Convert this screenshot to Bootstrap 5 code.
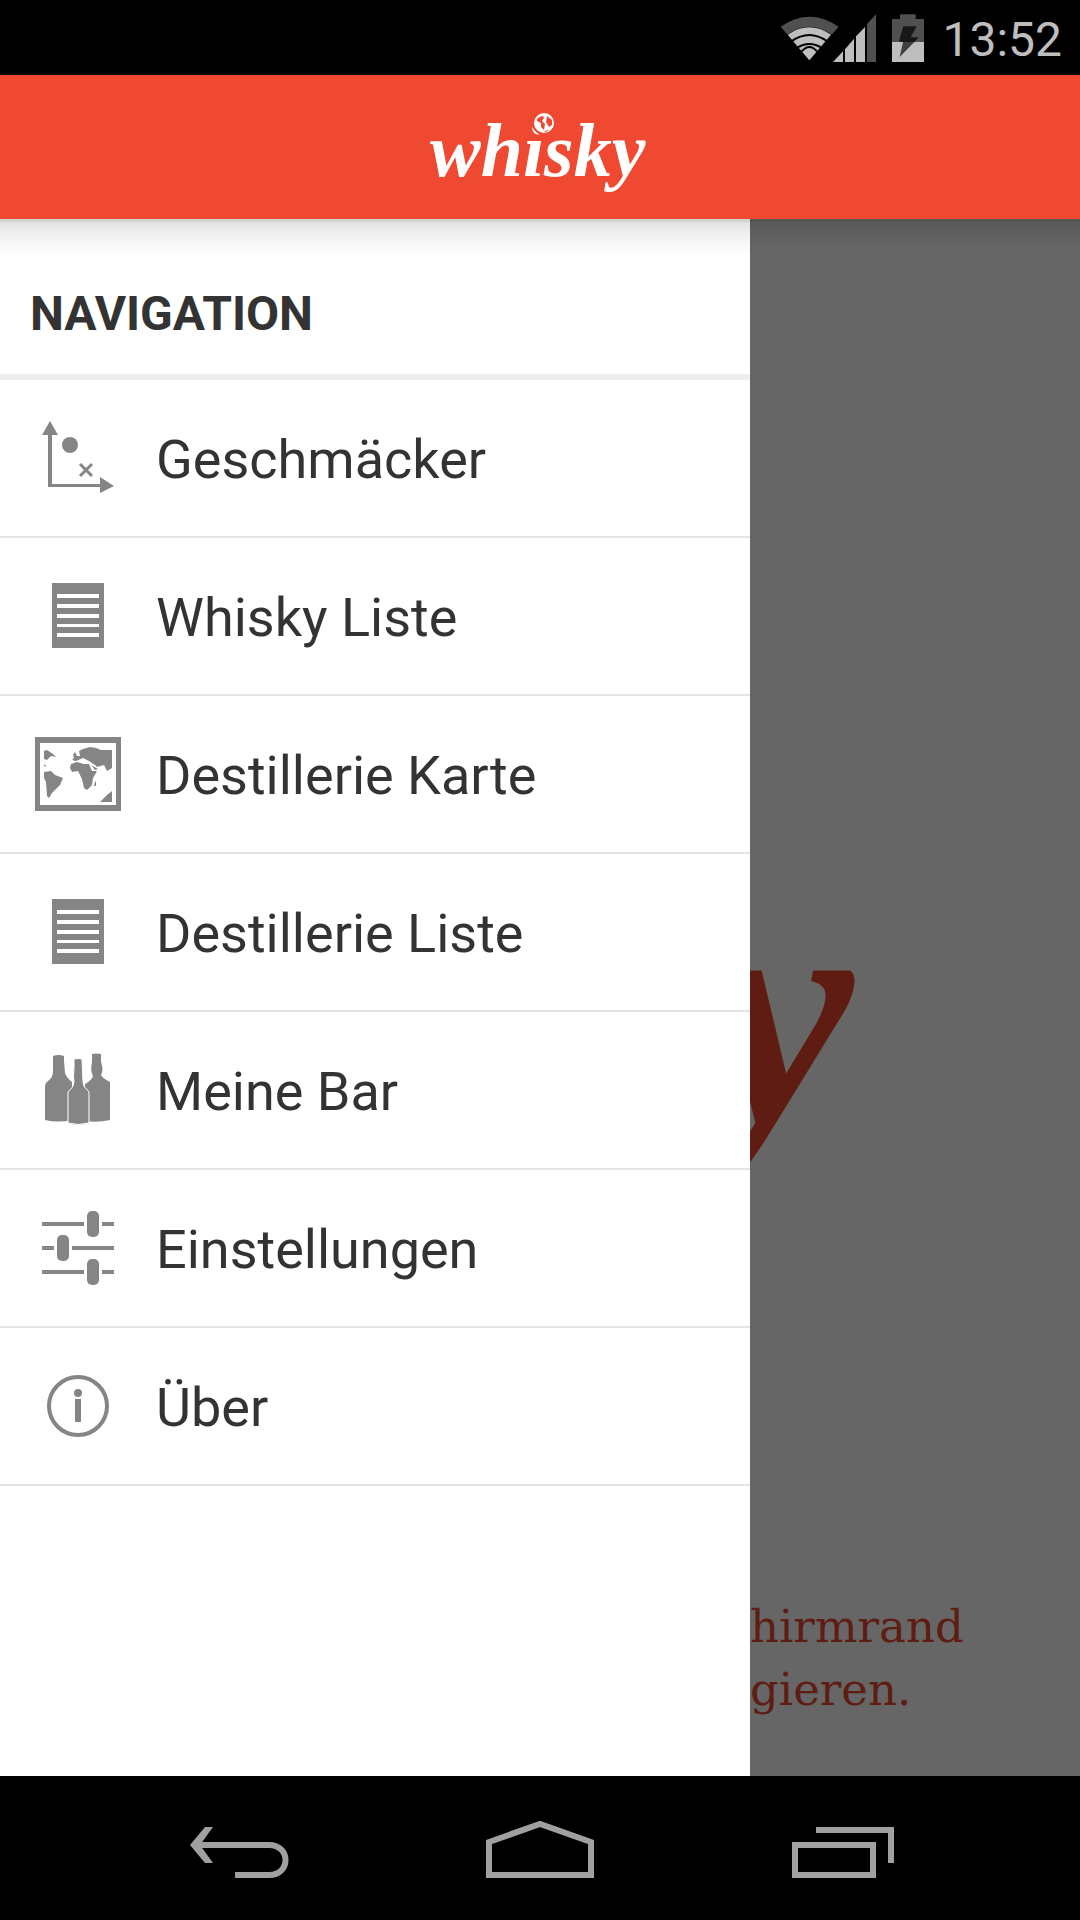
<!DOCTYPE html>
<html lang="de">
<head>
<meta charset="utf-8">
<meta name="viewport" content="width=device-width, initial-scale=1">
<title>Whisky</title>
<link href="https://cdn.jsdelivr.net/npm/bootstrap@5.3.0/dist/css/bootstrap.min.css" rel="stylesheet">
<style>
  body { font-family: Roboto, "Noto Sans", sans-serif; color: #333; background: #000; }
  svg { display: block; flex: none; }
  .status-bar { height: 75px; padding: 4px 18px 0 0; color: #bebebe; }
  .clock { font-size: 48px; line-height: 72px; margin-left: 16px; }
  .app-bar { height: 144px; background: #f04932; }
  .brand-text { font-family: "Liberation Serif", serif; font-weight: 700; font-style: italic; }
  .stage::before {
    content: ""; position: absolute; inset: 0 0 auto 0; height: 40px; z-index: 2; pointer-events: none;
    background: linear-gradient(rgba(0,0,0,.17) 3px, rgba(0,0,0,.12) 3px, rgba(0,0,0,.06) 15px, rgba(0,0,0,.02) 28px, transparent);
  }
  .drawer { flex: 0 0 750px; max-width: 85%; }
  .drawer-title { font-size: 48px; line-height: 56px; padding: 67px 30px 32px; border-bottom: 6px solid #eee; }
  .drawer-title, .drawer-list a { color: #333; }
  .drawer-list a { height: 158px; padding: 4px 30px 0; border-bottom: 2px solid #e4e4e4; font-size: 54px; line-height: 64px; }
  .drawer-list svg { width: 96px; height: 96px; margin-right: 30px; fill: #858585; }
  .backdrop { background: #666; color: #5f1c13; padding-bottom: 55px; }
  .hint { font-family: "DejaVu Serif", serif; font-size: 45px; line-height: 63px; white-space: nowrap; }
  .big-mark { margin-bottom: 396px; fill: #5f1c13; }
  .nav-keys { height: 144px; }
  .nav-keys button { flex: 0 0 306px; height: 144px; padding: 0; border: 0; background: none; }
</style>
</head>
<body>
<div class="min-vh-100 d-flex flex-column">
  <div class="status-bar d-flex align-items-center justify-content-end bg-black">
    <svg width="146" height="75" viewBox="0 0 438 225" aria-hidden="true">
      <path fill="#505050" d="M2 74Q88 15 176 74L88 175Z"/>
      <path fill="#000" d="M20 98Q88 50 156 98L88 175Z"/>
      <path fill="#bebebe" d="M23 98Q88 54 153 98L88 175Z"/>
      <g fill="none" stroke="#000" stroke-width="6"><path d="M34 118Q88 80 142 118M50 138Q88 114 126 138"/><path d="M65 148Q88 122 111 148"/></g>
      <path fill="#bebebe" d="M159 180L189 148V180ZM195 142L222 110V180H195ZM228 103L255 75V180H228Z"/>
      <path fill="#505050" d="M261 66L288 37V180H261Z"/>
      <path fill="#505050" d="M336 51H360V37H407V51H432V120H336Z"/>
      <path fill="#bebebe" d="M336 120H432V180H336Z"/>
      <path fill="#181818" d="M370 73H410L392 106H416L403 120H363L357 117Z"/>
      <path fill="#404040" d="M364 120H403L359 165L369 120Z"/>
    </svg>
    <time class="clock">13:52</time>
  </div>

  <header class="app-bar d-flex justify-content-center">
    <svg width="240" height="144" viewBox="0 0 240 144" role="img" aria-label="whisky">
      <text class="brand-text" x="10" y="101" font-size="76" fill="#fff">whisky</text>
      <circle cx="124" cy="48" r="12" fill="#f04932"/>
      <circle cx="124" cy="48" r="10" fill="#fff"/>
      <path fill="#f04932" d="M117 44q3-3 6-3l1 2-2 3 3 3-1 6-3-3v-4l-4-2zM127 41l5 4v5l-3 2-3-5zM124 56l5-1-3 2z"/>
    </svg>
  </header>

  <div class="stage position-relative d-flex flex-grow-1">
    <nav class="drawer bg-white" aria-label="Navigation">
      <h1 class="drawer-title fw-bold m-0">NAVIGATION</h1>
      <div class="drawer-list">
        <a href="#" class="d-flex align-items-center text-decoration-none">
          <svg viewBox="0 0 96 96"><path d="M20 9L28 23H22V72H70V65L84 74L70 81V75H18V23H12Z"/><circle cx="40" cy="33" r="8"/><path d="M50 52L62 64M62 52L50 64" fill="none" stroke="#858585" stroke-width="3"/></svg>
          <span>Geschmäcker</span></a>
        <a href="#" class="d-flex align-items-center text-decoration-none">
          <svg viewBox="0 0 96 96"><path fill-rule="evenodd" d="M22 13H74V78H22ZM27 24V28H69V24ZM27 34V38H69V34ZM27 44V48H69V44ZM27 54V57H69V54ZM27 63V67H69V63Z"/></svg>
          <span>Whisky Liste</span></a>
        <a href="#" class="d-flex align-items-center text-decoration-none">
          <svg viewBox="0 0 96 96"><path fill-rule="evenodd" d="M5 9H91V83H5ZM10 15V77H86V15Z"/>
            <path d="M14 23L17 22L23 26L26 29L21 28L17 32L14 31ZM14 36L17 39L14 38ZM14 44L21 43L25 47L33 50L30 57L26 61L22 65L19 70L17 68L16 54L14 50ZM41 36L47 34L54 36L59 36L62 43L67 43L63 50L62 57L57 62L54 60L52 51L48 43L42 44L40 40ZM43 27L45 24L47 28L50 28L49 23L53 21L60 19L66 20L71 22L82 22V40L77 43L74 37L67 39L65 37L59 33L53 30L46 33L42 32L44 30ZM61 37L68 41L65 42ZM65 54L66 53L66 58L64 58ZM70 74L77 67L82 63V74Z"/></svg>
          <span>Destillerie Karte</span></a>
        <a href="#" class="d-flex align-items-center text-decoration-none">
          <svg viewBox="0 0 96 96"><path fill-rule="evenodd" d="M22 13H74V78H22ZM27 24V28H69V24ZM27 34V38H69V34ZM27 44V48H69V44ZM27 54V57H69V54ZM27 63V67H69V63Z"/></svg>
          <span>Destillerie Liste</span></a>
        <a href="#" class="d-flex align-items-center text-decoration-none">
          <svg viewBox="0 0 96 96"><path d="M23 12Q28 10 34 12V17L35 29Q36 33 42 38V76Q28 79 15 76V43Q15 39 18 37Q23 34 23 27V17ZM62 10Q67 9 71 10V18Q74 26 71 31Q72 34 80 38V76Q67 79 55 77V40Q62 36 63 32Q60 27 62 18Z"/><path stroke="#fff" d="M44 15Q48 14 52 15L53 38Q53 43 59 48V79Q48 82 38 79V48Q44 43 44 38Q43 33 44 24Z"/></svg>
          <span>Meine Bar</span></a>
        <a href="#" class="d-flex align-items-center text-decoration-none">
          <svg viewBox="0 0 96 96"><path d="M12 20H54V24H12ZM72 20H84V24H72ZM12 44H24V48H12ZM42 44H84V48H42ZM12 68H54V72H12ZM72 68H84V72H72Z"/><rect x="57" y="9" width="12" height="26" rx="5"/><rect x="27" y="33" width="12" height="26" rx="5"/><rect x="57" y="57" width="12" height="26" rx="5"/></svg>
          <span>Einstellungen</span></a>
        <a href="#" class="d-flex align-items-center text-decoration-none">
          <svg viewBox="0 0 96 96"><circle cx="48" cy="46" r="29" fill="none" stroke="#858585" stroke-width="4"/><circle cx="48" cy="33" r="4"/><path d="M45 39H51V62H45Z"/></svg>
          <span>Über</span></a>
      </div>
    </nav>
    <main class="backdrop d-flex flex-column flex-grow-1 justify-content-end overflow-hidden">
      <svg class="big-mark" width="120" height="230" viewBox="0 0 120 230"><text class="brand-text" x="-43" y="153" font-size="330">y</text></svg>
      <p class="hint m-0">hirmrand<br>gieren.</p>
    </main>
  </div>

  <footer class="nav-keys bg-black d-flex justify-content-center">
    <button type="button" aria-label="Zurück"><svg class="mx-auto" width="120" height="144" viewBox="0 0 120 144" fill="none" stroke="#a0a0a0" stroke-width="6"><path d="M22 69H95C117 69 117 99 95 99H61"/><path fill="#a0a0a0" stroke="none" d="M31 51H39L26 69L39 87H31L16 69Z"/></svg></button>
    <button type="button" aria-label="Startseite"><svg class="mx-auto" width="108" height="144" viewBox="0 0 108 144" fill="none" stroke="#a0a0a0" stroke-width="6"><path d="M3 99V66L54 48L105 66V99Z"/></svg></button>
    <button type="button" aria-label="Letzte Apps"><svg class="mx-auto" width="108" height="144" viewBox="0 0 108 144" fill="none" stroke="#a0a0a0" stroke-width="6"><path d="M3 69H81V99H3ZM24 54H99V87"/></svg></button>
  </footer>
</div>
<script src="https://cdn.jsdelivr.net/npm/bootstrap@5.3.0/dist/js/bootstrap.bundle.min.js"></script>
</body>
</html>
